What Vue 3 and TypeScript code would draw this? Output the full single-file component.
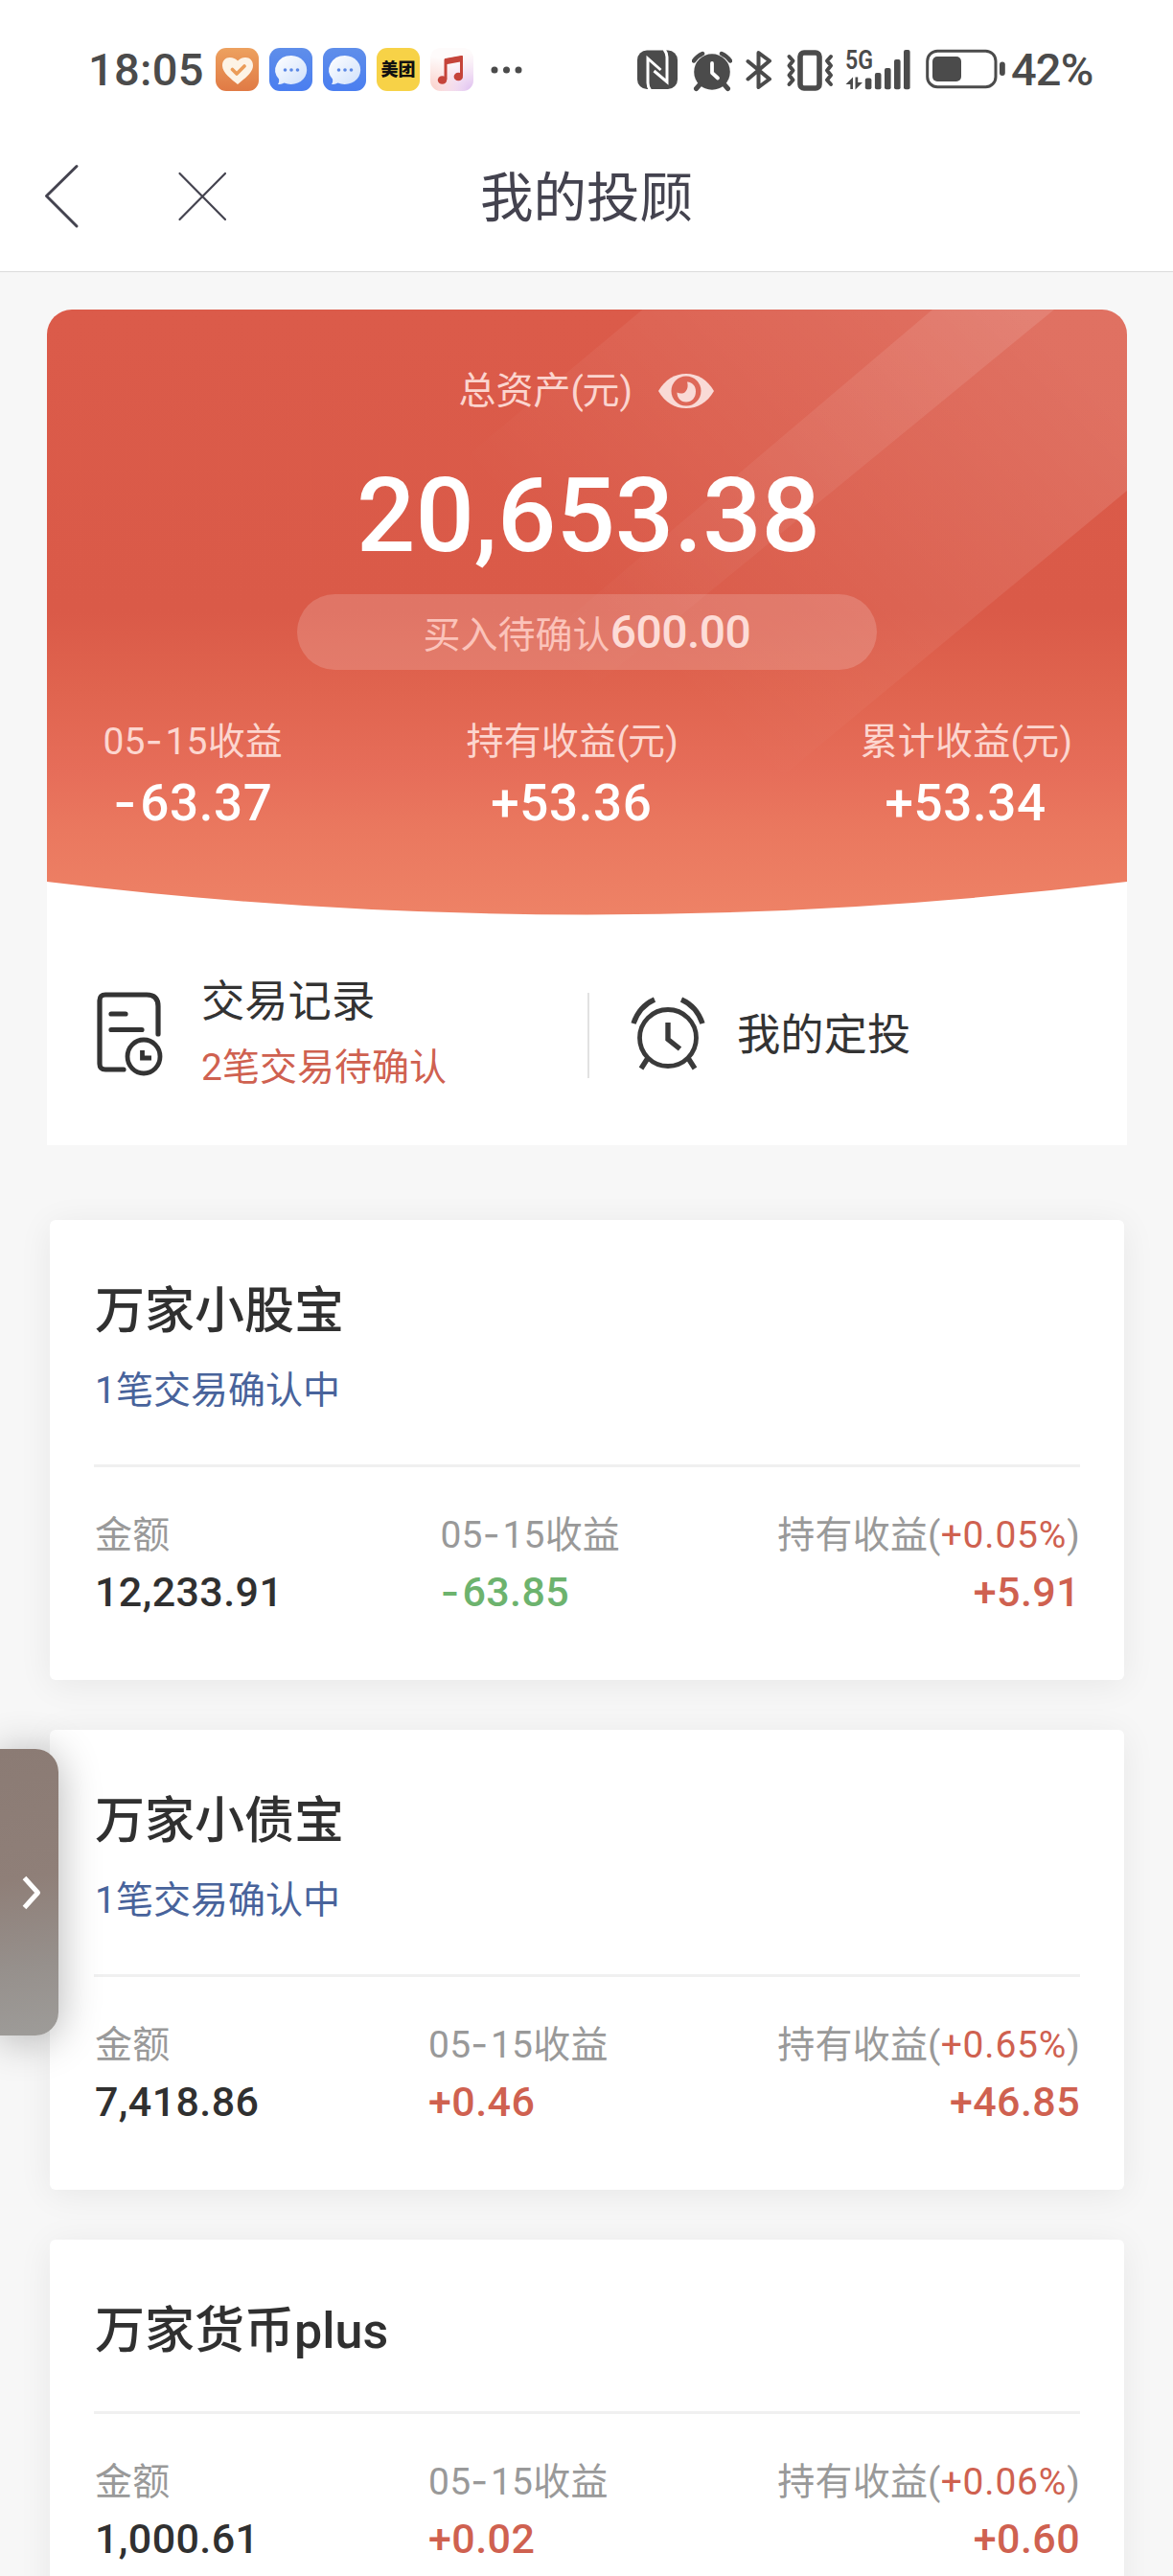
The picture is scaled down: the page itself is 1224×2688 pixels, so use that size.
<script setup lang="ts">
import { h } from 'vue'

interface Stat {
  label: string
  value: string
}

interface Fund {
  name: string
  pending?: string
  amount: string
  daily: string
  rate: string
  holding: string
}

const stats: Stat[] = [
  { label: '05-15收益', value: '-63.37' },
  { label: '持有收益(元)', value: '+53.36' },
  { label: '累计收益(元)', value: '+53.34' },
]

const funds: Fund[] = [
  { name: '万家小股宝', pending: '1笔交易确认中', amount: '12,233.91', daily: '-63.85', rate: '+0.05%', holding: '+5.91' },
  { name: '万家小债宝', pending: '1笔交易确认中', amount: '7,418.86', daily: '+0.46', rate: '+0.65%', holding: '+46.85' },
  { name: '万家货币plus', amount: '1,000.61', daily: '+0.02', rate: '+0.06%', holding: '+0.60' },
]

const tone = (value: string): string => (value.startsWith('-') ? 'down' : 'up')

// Text whose hyphens are set in a wider face than the digits around them,
// and whose parentheses are drawn a little tighter.
const Txt = (props: { value: string }) =>
  h(
    'span',
    props.value.split(/([-()])/).filter(Boolean).map((part) => {
      if (part === '-') return h('span', { class: 'hyphen' }, part)
      if (part === '(' || part === ')') return h('span', { class: 'paren' }, part)
      return part
    }),
  )
Txt.props = ['value']
</script>

<template>
  <div class="page">
    <header class="status">
      <span class="clock">18:05</span>
      <div class="apps">
        <svg width="45" height="45" viewBox="0 0 45 45">
          <defs>
            <linearGradient id="gOrange" x1="0" y1="0" x2="0" y2="1">
              <stop offset="0" stop-color="#eda15f" /><stop offset="1" stop-color="#e07a45" />
            </linearGradient>
          </defs>
          <rect width="45" height="45" rx="11" fill="url(#gOrange)" />
          <path d="M23 38C17 33 7 26 7 18.500C7 13 10.500 10 14.500 10C18.500 10 21 11.500 23 13.500C25 11.500 27.500 10 31.500 10C35.500 10 39 13 39 18.500C39 26 29 33 23 38Z" fill="#fdf3e6" />
          <path d="M17.500 22.500L22 27L30 19" fill="none" stroke="#eb9c58" stroke-width="3.600" stroke-linecap="round" stroke-linejoin="round" />
        </svg>
        <svg v-for="n in 2" :key="n" width="45" height="45" viewBox="0 0 45 45">
          <defs>
            <linearGradient id="gBlue" x1="0" y1="0" x2="0" y2="1">
              <stop offset="0" stop-color="#5f8eea" /><stop offset="1" stop-color="#4a7ef0" />
            </linearGradient>
            <linearGradient id="gBubble" x1="0" y1="0" x2="1" y2="1">
              <stop offset="0" stop-color="#ffffff" /><stop offset="1" stop-color="#cfe0fb" />
            </linearGradient>
          </defs>
          <rect width="45" height="45" rx="11" fill="url(#gBlue)" />
          <path d="M23 8A16.500 15 0 1 1 15.500 36.500C13.500 37.500 11 38 9 38C10 36.500 10.500 34.500 10 32.500A16.500 15 0 0 1 23 8Z" fill="url(#gBubble)" />
          <circle cx="16.500" cy="23" r="1.800" fill="#5b88e6" /><circle cx="23" cy="23" r="1.800" fill="#5b88e6" /><circle cx="29.500" cy="23" r="1.800" fill="#5b88e6" />
        </svg>
        <span class="meituan">美团</span>
        <svg width="45" height="45" viewBox="0 0 45 45">
          <defs>
            <radialGradient id="gMusicA" cx="0" cy="1" r="0.8">
              <stop offset="0" stop-color="#fbcfc9" /><stop offset="1" stop-color="#fbcfc9" stop-opacity="0" />
            </radialGradient>
            <radialGradient id="gMusicB" cx="1" cy="1" r="0.9">
              <stop offset="0" stop-color="#dcbcf0" /><stop offset="1" stop-color="#f3d6ee" stop-opacity="0" />
            </radialGradient>
          </defs>
          <rect width="45" height="45" rx="11" fill="#fefbfb" />
          <rect width="45" height="45" rx="11" fill="url(#gMusicA)" />
          <rect width="45" height="45" rx="11" fill="url(#gMusicB)" />
          <path d="M16 33V12.500L32.500 9.500V29.500" fill="none" stroke="#c5443a" stroke-width="3" stroke-linejoin="round" />
          <path d="M15 11.500L34 8.300V14L15 17.500Z" fill="#c5443a" />
          <ellipse cx="12.500" cy="33.500" rx="4.700" ry="4.300" fill="#c5443a" /><ellipse cx="29.300" cy="30" rx="4.700" ry="4.300" fill="#c5443a" />
        </svg>
        <svg class="more" width="34" height="8" viewBox="0 0 34 8" fill="#4b4b4b">
          <circle cx="4" cy="4" r="3.500" /><circle cx="16.500" cy="4" r="3.500" /><circle cx="29" cy="4" r="3.500" />
        </svg>
      </div>
      <div class="signals">
        <svg class="nfc" width="42" height="46" viewBox="665 49.500 42 46">
          <rect x="665" y="52" width="42" height="40.500" rx="10" fill="#4b4b4b" />
          <path d="M678.500 93.500Q676 90.500 676 86V60.500L689.500 72.500M693 51Q696 55 696 59V85L682.500 73.500" fill="none" stroke="#fff" stroke-width="3" />
        </svg>
        <svg class="alarm" width="42" height="46" viewBox="722 49.500 42 46">
          <circle cx="743" cy="74.500" r="18.800" fill="#4b4b4b" />
          <path d="M730 88L726.500 92M756 88L759.500 92" stroke="#4b4b4b" stroke-width="5" stroke-linecap="round" />
          <path d="M724 63A22 22 0 0 1 733 55.500M762 63A22 22 0 0 0 753 55.500" fill="none" stroke="#4b4b4b" stroke-width="4.500" stroke-linecap="round" />
          <path d="M743 65.500V75.500L749 81" fill="none" stroke="#fff" stroke-width="3.800" stroke-linecap="round" stroke-linejoin="round" />
        </svg>
        <svg class="bt" width="28" height="46" viewBox="778 49.500 28 46">
          <path d="M780.500 63.500L803 82L791.500 90.500V54.500L803 63L780.500 82" fill="none" stroke="#4b4b4b" stroke-width="4" stroke-linejoin="round" stroke-linecap="round" />
        </svg>
        <svg class="vib" width="51" height="46" viewBox="820 49.500 51 46" fill="none" stroke="#4b4b4b">
          <rect x="835" y="54.500" width="20" height="37" rx="4" stroke-width="5.600" />
          <path d="M823.500 58.500L827.500 63L823.500 68L827.500 73L823.500 78L827.500 83L823.500 87.500M867 58.500L863 63L867 68L863 73L867 78L863 83L867 87.500" stroke-width="4" stroke-linejoin="round" stroke-linecap="round" />
        </svg>
        <svg class="cell" width="70" height="60" viewBox="881 42.500 70 60" fill="#4b4b4b">
          <text class="net" x="882" y="71.500" textLength="29" lengthAdjust="spacingAndGlyphs">5G</text>
          <path d="M890 80V92.500H887.300V87.500H882.500ZM892.500 80H895.200V85.500H900L892.500 93Z" />
          <rect x="902.800" y="81" width="6.600" height="11.700" rx="2" />
          <rect x="912.900" y="75.500" width="6.600" height="17.200" rx="2" />
          <rect x="923" y="70.500" width="6.600" height="22.200" rx="2" />
          <rect x="933" y="61.500" width="6.600" height="31.200" rx="2" />
          <rect x="943" y="51.500" width="6.600" height="41.200" rx="2" />
        </svg>
        <svg class="battery" width="84" height="46" viewBox="966 49.500 84 46">
          <rect x="967.700" y="52.700" width="71.300" height="37.500" rx="10.500" fill="none" stroke="#4b4b4b" stroke-width="3" />
          <rect x="973" y="58.500" width="30" height="26" rx="5" fill="#4b4b4b" />
          <rect x="1043" y="64" width="5.800" height="14.500" rx="2.900" fill="#4b4b4b" />
        </svg>
        <span class="clock percent">42%</span>
      </div>
    </header>

    <nav class="nav">
      <div class="nav-side">
        <svg width="38" height="78" viewBox="46 165 38 78" fill="none" stroke="#44434f" stroke-width="3">
          <path d="M80 173.500L48.500 204.500L80 236" stroke-linecap="round" stroke-linejoin="round" />
        </svg>
        <svg width="54" height="78" viewBox="184 165 54 78" fill="none" stroke="#44434f" stroke-width="2.200">
          <path d="M187.500 181L235 229M235 181L187.500 229" stroke-linecap="round" />
        </svg>
      </div>
      <h1>我的投顾</h1>
      <div class="nav-side"></div>
    </nav>

    <section class="hero">
      <div class="hero-head">
        <svg class="hero-bg" width="1127" height="632" viewBox="0 0 1127 632">
          <defs>
            <linearGradient id="gHero" x1="0" y1="0" x2="0" y2="1">
              <stop offset="0" stop-color="#db5b4a" /><stop offset="0.5" stop-color="#da5a48" />
              <stop offset="0.63" stop-color="#e0644f" /><stop offset="0.76" stop-color="#e66d59" />
              <stop offset="0.86" stop-color="#ea785f" /><stop offset="1" stop-color="#ee8266" />
            </linearGradient>
            <linearGradient id="gRay" gradientUnits="userSpaceOnUse" x1="980" y1="-40" x2="600" y2="330">
              <stop offset="0" stop-color="#fff" stop-opacity="0.135" /><stop offset="1" stop-color="#fff" stop-opacity="0" />
            </linearGradient>
            <linearGradient id="gRay2" gradientUnits="userSpaceOnUse" x1="1000" y1="-40" x2="540" y2="380">
              <stop offset="0" stop-color="#fff" stop-opacity="0.115" /><stop offset="1" stop-color="#fff" stop-opacity="0" />
            </linearGradient>
            <clipPath id="cHero"><path d="M0 0H1127V597Q563.500 666 0 597Z" /></clipPath>
          </defs>
          <g clip-path="url(#cHero)">
            <rect width="1127" height="632" fill="url(#gHero)" />
            <path d="M621.500 0H1127V189L697.500 545H-32.500Z" fill="url(#gRay)" />
            <path d="M924 0H1051L386 545H281Z" fill="url(#gRay2)" />
          </g>
        </svg>
        <div class="total-label">
          <Txt value="总资产(元)" />
          <svg width="60" height="38" viewBox="0 0 60 38">
            <path d="M1 19C8 7 18 1 30 1S52 7 59 19C52 31 42 37 30 37S8 31 1 19Z" fill="#f9dad6" />
            <ellipse cx="30" cy="19" rx="15.500" ry="15.500" fill="#de6858" />
            <path d="M31 9.500C37 10 40 14 40 19.500C40 26 36 30.500 30 30.500C24 30.500 20.500 26 20.500 20.500C23 22 27 22 29 20C32 17 32 13 31 9.500Z" fill="#f9dad6" />
          </svg>
        </div>
        <div class="total">20,653.38</div>
        <div class="pill"><span>买入待确认</span><b>600.00</b></div>
        <div class="stats">
          <div v-for="s in stats" :key="s.label" class="stat">
            <Txt class="stat-label" :value="s.label" />
            <Txt class="stat-value" :value="s.value" />
          </div>
        </div>
      </div>
      <div class="actions">
        <div class="action records">
          <svg width="72" height="88" viewBox="0 0 72 88" fill="none" stroke="#333" stroke-width="5.200" stroke-linecap="round">
            <path d="M29 81H10Q4 81 4 75V9Q4 3 10 3H53Q65 3 65 15V44" />
            <path d="M16 23H31M16 39.500H48" />
            <ellipse cx="50" cy="67.500" rx="17" ry="17.500" stroke-width="4.800" />
            <path d="M48.500 61V69H58" stroke-width="4.800" stroke-linecap="butt" />
          </svg>
          <div class="action-text">
            <span class="action-title">交易记录</span>
            <span class="action-sub">2笔交易待确认</span>
          </div>
        </div>
        <i class="split"></i>
        <div class="action plan">
          <svg width="78" height="78" viewBox="0 0 78 78" fill="none" stroke="#3a3a3a" stroke-width="4.800">
            <ellipse cx="39" cy="43" rx="29.500" ry="29.500" />
            <path d="M3 28Q9 10 25 3M75 28Q69 10 53 3M18 64L11 75M60 64L67 75" stroke-width="5.400" />
            <path d="M39 27V44.500L51.500 54.500" stroke-width="5.400" />
          </svg>
          <span class="action-title">我的定投</span>
        </div>
      </div>
    </section>

    <section v-for="f in funds" :key="f.name" class="card">
      <h2>{{ f.name }}</h2>
      <p v-if="f.pending" class="pending">{{ f.pending }}</p>
      <hr :class="{ tight: !f.pending }" />
      <div class="figures">
        <div class="figure">
          <span class="label">金额</span>
          <Txt class="value" :value="f.amount" />
        </div>
        <div class="figure">
          <Txt class="label" value="05-15收益" />
          <Txt class="value" :class="tone(f.daily)" :value="f.daily" />
        </div>
        <div class="figure last">
          <span class="label">持有收益(<em>{{ f.rate }}</em>)</span>
          <Txt class="value" :class="tone(f.holding)" :value="f.holding" />
        </div>
      </div>
    </section>

    <aside class="handle">
      <svg width="22" height="38" viewBox="0 0 22 38" fill="none" stroke="#fff" stroke-width="5">
        <path d="M2.500 3.500L16.500 19L2.500 34.500" stroke-linejoin="round" />
      </svg>
    </aside>
  </div>
</template>

<style>
body {
  margin: 0;
  background: #f7f7f7;
}
</style>

<style scoped>
.page {
  position: relative;
  width: 1224px;
  height: 2688px;
  overflow: hidden;
  background: #f7f7f7;
  color: #333;
  font-family: Roboto, "Noto Sans CJK SC", sans-serif;
  white-space: nowrap;
}
h1, h2, p { margin: 0; font-weight: 400; }
svg { display: block; flex: none; }
em, b { font-style: normal; font-weight: inherit; }
:deep(.hyphen) {
  font-family: Inter, sans-serif;
  line-height: 0;
  letter-spacing: 0.07em;
}
:deep(.paren) { letter-spacing: -0.04em; }

.status {
  box-sizing: border-box;
  height: 145px;
  padding: 0 0 0 92px;
  background: #fff;
  display: flex;
  align-items: center;
}
.clock {
  font-size: 47px;
  font-weight: 500;
  line-height: 60px;
  color: #4b4b4b;
}
.status > .clock { width: 133px; letter-spacing: 0.3px; }
.percent { letter-spacing: -0.9px; }
.apps { display: flex; align-items: center; gap: 11px; width: 440px; }
.apps .more { margin-left: 7px; }
.meituan {
  width: 45px;
  height: 45px;
  border-radius: 11px;
  background: #f7d247;
  color: #111;
  font-size: 18px;
  font-weight: 900;
  line-height: 45px;
  text-align: center;
}
.signals { display: flex; align-items: center; }
.nfc { margin-right: 15px; }
.alarm { margin-right: 14px; }
.bt { margin-right: 14px; }
.vib { margin-right: 10px; }
.cell { margin-right: 15px; }
.battery { margin-right: 5px; }
.net { font-size: 28px; font-weight: 600; }

.nav {
  box-sizing: border-box;
  height: 139px;
  padding: 0 46px 12px;
  background: #fff;
  border-bottom: 1px solid #dcdcdc;
  display: flex;
  align-items: center;
}
.nav-side { width: 300px; display: flex; gap: 100px; margin-top: -8px; }
.nav h1 {
  flex: 1;
  text-align: center;
  font-size: 55.500px;
  line-height: 80px;
  color: #44434f;
}

.hero {
  width: 1127px;
  height: 872px;
  margin: 39px 0 0 49px;
  border-radius: 26px 26px 0 0;
  overflow: hidden;
  background: #fff;
}
.hero-head {
  position: relative;
  box-sizing: border-box;
  height: 631px;
  padding-top: 55px;
  display: flex;
  flex-direction: column;
  align-items: center;
}
.hero-bg { position: absolute; left: 0; top: 0; }
.hero-head > div { position: relative; }
.total-label {
  display: flex;
  align-items: center;
  gap: 28px;
  font-size: 39px;
  line-height: 60px;
  color: #fbd5cf;
}
.total {
  margin-top: 45px;
  padding-left: 3px;
  font-size: 108px;
  font-weight: 470;
  line-height: 110px;
  color: #fff;
}
.pill {
  width: 605px;
  height: 79px;
  margin-top: 27px;
  border-radius: 40px;
  background: rgba(255, 255, 255, 0.17);
  line-height: 79px;
  text-align: center;
}
.pill span { font-size: 39px; color: #fbc3ba; }
.pill b { font-size: 48px; font-weight: 500; letter-spacing: -0.5px; color: #fddcd7; }
.stats {
  width: 1010px;
  margin-top: 50px;
  display: flex;
  justify-content: space-between;
}
.stat { display: flex; flex-direction: column; align-items: center; }
.stat-label { font-size: 39px; line-height: 50px; letter-spacing: 0.2px; color: #fcd6cf; }
.stat-value {
  margin-top: 9px;
  font-size: 53px;
  font-weight: 500;
  line-height: 60px;
  letter-spacing: 0.6px;
  color: #fff;
}

.actions {
  box-sizing: border-box;
  height: 241px;
  padding: 9px 0 0 51px;
  display: flex;
  align-items: center;
}
.action { display: flex; align-items: center; }
.records { width: 513px; gap: 38px; }
.action-text { display: flex; flex-direction: column; gap: 13px; margin-top: -3px; }
.action-title { font-size: 45.300px; line-height: 60px; color: #333; }
.action-sub { font-size: 39px; line-height: 50px; color: #cf6150; }
.split { width: 2px; height: 89px; margin-top: 2px; background: #e2e2e2; }
.plan { margin-left: 43px; gap: 33px; }
.plan .action-title { margin-top: 4px; }

.card {
  box-sizing: border-box;
  width: 1121px;
  height: 480px;
  margin: 0 0 52px 52px;
  padding: 61px 46px 0;
  border-radius: 6px;
  background: #fff;
  box-shadow: 0 5px 36px rgba(0, 0, 0, 0.065);
}
.hero + .card { margin-top: 78px; }
.card h2 { padding-left: 1px; font-size: 52px; font-weight: 500; line-height: 70px; color: #303030; }
.pending { margin-top: 22px; padding-left: 1px; font-size: 39px; line-height: 50px; color: #48639b; }
.card hr { height: 3px; margin: 52px 0 0; border: 0; background: #f0f0f0; }
.card hr.tight { margin-top: 48px; }
.figures { display: flex; justify-content: space-between; margin-top: 46px; padding-left: 1px; }
.figure { display: flex; flex-direction: column; gap: 9px; line-height: 50px; }
.last { align-items: flex-end; }
.label { font-size: 39px; letter-spacing: 0.2px; color: #999; }
.label em { color: #cf6150; letter-spacing: 0.8px; }
.value { font-size: 43px; font-weight: 500; letter-spacing: 0.4px; color: #303030; }
.value.up { color: #cf6150; }
.value.down { color: #6db36e; }

.handle {
  position: absolute;
  left: 0;
  top: 1825px;
  width: 61px;
  height: 299px;
  box-sizing: border-box;
  padding-left: 23px;
  border-radius: 0 24px 24px 0;
  background: linear-gradient(170deg, #8b7b74 0%, #8f7f78 45%, #96908c 75%, #9e9c99 100%);
  box-shadow: 0 4px 44px rgba(0, 0, 0, 0.3);
  display: flex;
  align-items: center;
}
</style>
